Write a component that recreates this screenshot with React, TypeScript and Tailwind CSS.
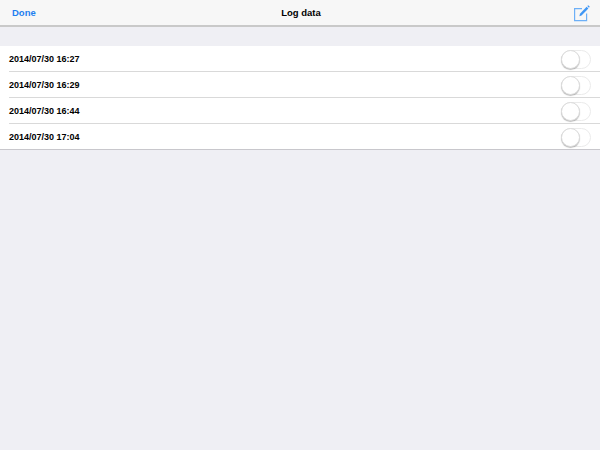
const logs = ["2014/07/30 16:27", "2014/07/30 16:29", "2014/07/30 16:44", "2014/07/30 17:04"];

function Toggle() {
  return (
    <div className="relative h-[19px] w-[30px] rounded-full border border-[#ebebeb] bg-white">
      <div className="absolute -left-px -top-px h-[19px] w-[19px] rounded-full border border-[#dcdcdc] bg-white shadow-[0_1px_1px_rgba(0,0,0,0.25)]" />
    </div>
  );
}

export default function App() {
  return (
    <div className="flex h-[450px] w-[600px] flex-col overflow-hidden bg-[#efeff4] font-['Liberation_Sans',sans-serif]">
      <header className="grid h-[27px] grid-cols-3 items-center border-b-2 border-[#c9c9c9] bg-[#f7f7f7] pl-[12px] pr-[10px]">
        <span className="pt-[2px] text-[9.5px] font-bold text-[#1e7ff0]">Done</span>
        <span className="pt-[2px] text-center text-[9.5px] font-bold text-black">Log data</span>
        <svg className="justify-self-end" width="17" height="18" viewBox="0 0 17 18" fill="none">
          <path d="M9 4.6H1.6v12h12V9.5" stroke="#6db0f7" strokeWidth="1.2" />
          <path d="M6.4 12.2 7 9.8 13.6 2.8l1.8 1.8-6.9 7z" fill="#3f97f5" />
          <path d="M14.3 2.1l.9-.9 1.6 1.6-.9 1z" fill="#3f97f5" />
        </svg>
      </header>
      <ul className="mt-[19px] bg-white">
        {logs.map((log, i) => (
          <li key={log} className={i === logs.length - 1 ? "border-b border-[#c8c7cc] pl-[9px]" : "pl-[9px]"}>
            <div className={`flex items-center justify-between pr-[9px] pt-px ${i < logs.length - 1 ? "h-[26px] border-b border-[#d9d9d9]" : "h-[25px]"}`}>
              <span className="pt-px text-[9px] font-bold text-black">{log}</span>
              <Toggle />
            </div>
          </li>
        ))}
      </ul>
    </div>
  );
}
